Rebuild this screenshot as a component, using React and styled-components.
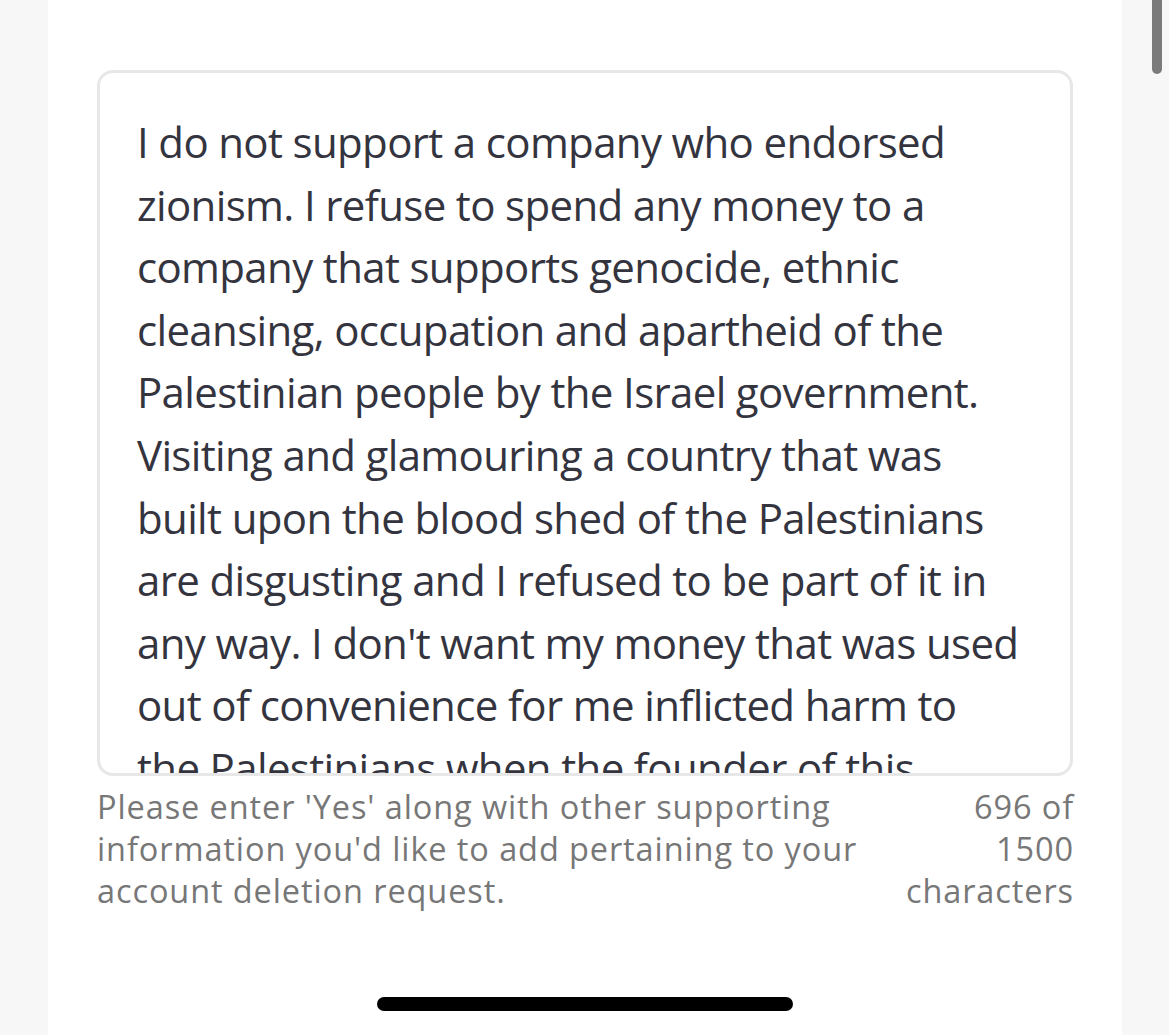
import React from 'react';
import styled, { createGlobalStyle } from 'styled-components';

const GlobalStyle = createGlobalStyle`
  html, body {
    margin: 0;
    padding: 0;
    background: #f7f7f7;
  }
  body {
    font-family: 'Open Sans', 'Noto Sans', sans-serif;
  }
`;

const Screen = styled.div`
  position: relative;
  width: 1169px;
  height: 1035px;
  display: flex;
  overflow: hidden;
`;

const Card = styled.main`
  margin-left: 48px;
  width: 1074px;
  height: 100%;
  background: #ffffff;
  display: flex;
  flex-direction: column;
  padding: 70px 49px 0 49px;
  box-sizing: border-box;
`;

const Field = styled.div`
  height: 706px;
  border: 3px solid #e7e7e7;
  border-radius: 16px;
  box-sizing: border-box;
  padding: 38px 38px 0 37px;
  overflow: hidden;
  color: #34343f;
  font-size: 42px;
  line-height: 62.6px;
  letter-spacing: -0.65px;
`;

const Line = styled.div`
  white-space: nowrap;
`;

const HelperRow = styled.div`
  display: flex;
  justify-content: space-between;
  align-items: flex-start;
  padding-top: 10px;
  color: #777777;
  font-size: 32.5px;
  line-height: 42px;
  letter-spacing: 0.9px;
`;

const Hint = styled.p`
  margin: 0;
  white-space: nowrap;
`;

const Counter = styled.p`
  margin: 0 -1px 0 0;
  text-align: right;
  white-space: nowrap;
`;

const HomeBar = styled.div`
  position: absolute;
  left: 377px;
  top: 997px;
  width: 416px;
  height: 14px;
  border-radius: 7px;
  background: #000;
`;

const ScrollThumb = styled.div`
  position: absolute;
  right: 7px;
  top: -6px;
  width: 10px;
  height: 80px;
  border-radius: 5px;
  background: #7b7b7b;
`;

const lines = [
  'I do not support a company who endorsed',
  'zionism. I refuse to spend any money to a',
  'company that supports genocide, ethnic',
  'cleansing, occupation and apartheid of the',
  'Palestinian people by the Israel government.',
  'Visiting and glamouring a country that was',
  'built upon the blood shed of the Palestinians',
  'are disgusting and I refused to be part of it in',
  "any way. I don't want my money that was used",
  'out of convenience for me inflicted harm to',
  'the Palestinians when the founder of this',
];

export default function App() {
  return (
    <Screen>
      <GlobalStyle />
      <Card>
        <Field>
          {lines.map((l, i) => (
            <Line key={i}>{l}</Line>
          ))}
        </Field>
        <HelperRow>
          <Hint>
            Please enter 'Yes' along with other supporting
            <br />
            information you'd like to add pertaining to your
            <br />
            account deletion request.
          </Hint>
          <Counter>
            696 of
            <br />
            1500
            <br />
            characters
          </Counter>
        </HelperRow>
      </Card>
      <ScrollThumb />
      <HomeBar />
    </Screen>
  );
}
